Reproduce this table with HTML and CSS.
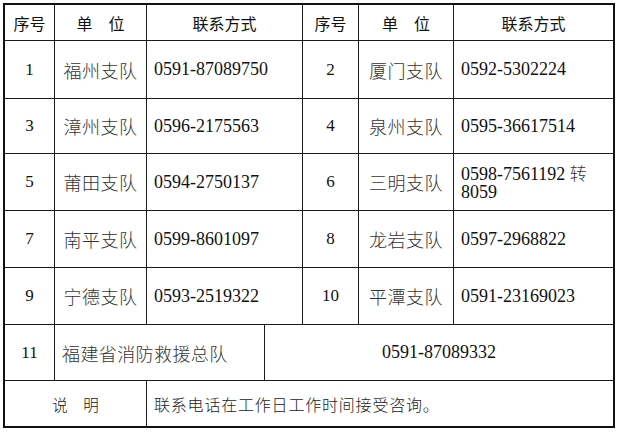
FILE: index.html
```html
<!DOCTYPE html>
<html lang="zh-CN">
<head>
<meta charset="utf-8">
<title>联系方式</title>
<link rel="stylesheet" href="styles.css">
</head>
<body>
<div class="sheet">
  <div class="c hd">序号</div>
  <div class="c hd">单　位</div>
  <div class="c hd s2">联系方式</div>
  <div class="c hd">序号</div>
  <div class="c hd">单　位</div>
  <div class="c hd">联系方式</div>

  <div class="c num">1</div>
  <div class="c name">福州支队</div>
  <div class="c tel s2">0591-87089750</div>
  <div class="c num">2</div>
  <div class="c name">厦门支队</div>
  <div class="c tel">0592-5302224</div>

  <div class="c num">3</div>
  <div class="c name">漳州支队</div>
  <div class="c tel s2">0596-2175563</div>
  <div class="c num">4</div>
  <div class="c name">泉州支队</div>
  <div class="c tel">0595-36617514</div>

  <div class="c num">5</div>
  <div class="c name">莆田支队</div>
  <div class="c tel s2">0594-2750137</div>
  <div class="c num">6</div>
  <div class="c name">三明支队</div>
  <div class="c tel wrap"><span class="lines">0598-7561192 <span class="zh">转</span><br>8059</span></div>

  <div class="c num">7</div>
  <div class="c name">南平支队</div>
  <div class="c tel s2">0599-8601097</div>
  <div class="c num">8</div>
  <div class="c name">龙岩支队</div>
  <div class="c tel">0597-2968822</div>

  <div class="c num">9</div>
  <div class="c name">宁德支队</div>
  <div class="c tel s2">0593-2519322</div>
  <div class="c num">10</div>
  <div class="c name">平潭支队</div>
  <div class="c tel">0591-23169023</div>

  <div class="c num">11</div>
  <div class="c name left s2">福建省消防救援总队</div>
  <div class="c tel mid s4">0591-87089332</div>

  <div class="c hd note s2">说　明</div>
  <div class="c memo s5">联系电话在工作日工作时间接受咨询。</div>
</div>
</body>
</html>
```
FILE: styles.css
```css
html, body {
  background: #fff;
}
body {
  margin: 3px;
}
.sheet {
  display: grid;
  grid-template-columns: 49px 91px 117px 37px 55px 94px 159px;
  grid-template-rows: 35px 57px 54px 56px 56px 56px 55px 45px;
  gap: 1px;
  width: 608px;
  border: 2px solid #111;
  background: #1a1a1a;
}
.c {
  background: #fff;
  display: flex;
  align-items: center;
  justify-content: center;
  overflow: hidden;
}
.s2 { grid-column: span 2; }
.s4 { grid-column: span 4; }
.s5 { grid-column: span 5; }
.hd {
  font-family: "Noto Sans CJK SC", sans-serif;
  font-size: 16px;
  color: #111;
}
.num {
  font-family: "Liberation Serif", "Noto Sans CJK SC", serif;
  font-size: 17px;
  color: #111;
}
.name {
  font-family: "Noto Sans CJK SC", sans-serif;
  font-weight: 300;
  font-size: 18px;
  letter-spacing: 0.5px;
  color: #333;
}
.left {
  justify-content: flex-start;
  padding-left: 7px;
  letter-spacing: 0.4px;
}
.tel {
  font-family: "Liberation Serif", "Noto Sans CJK SC", serif;
  font-size: 18px;
  color: #111;
  justify-content: flex-start;
  padding-left: 7px;
}
.wrap {
  padding-right: 4px;
}
.lines {
  display: block;
  line-height: 18px;
}
.zh {
  font-family: "Noto Sans CJK SC", sans-serif;
  font-weight: 300;
  font-size: 17px;
  line-height: 17px;
  color: #333;
}
.mid {
  justify-content: center;
  padding-left: 0;
}
.memo {
  font-family: "Noto Sans CJK SC", sans-serif;
  font-weight: 300;
  font-size: 16px;
  letter-spacing: 0.8px;
  color: #222;
  justify-content: flex-start;
  padding-left: 7px;
}
.note {
  font-weight: 300;
  font-size: 15.5px;
}
```
